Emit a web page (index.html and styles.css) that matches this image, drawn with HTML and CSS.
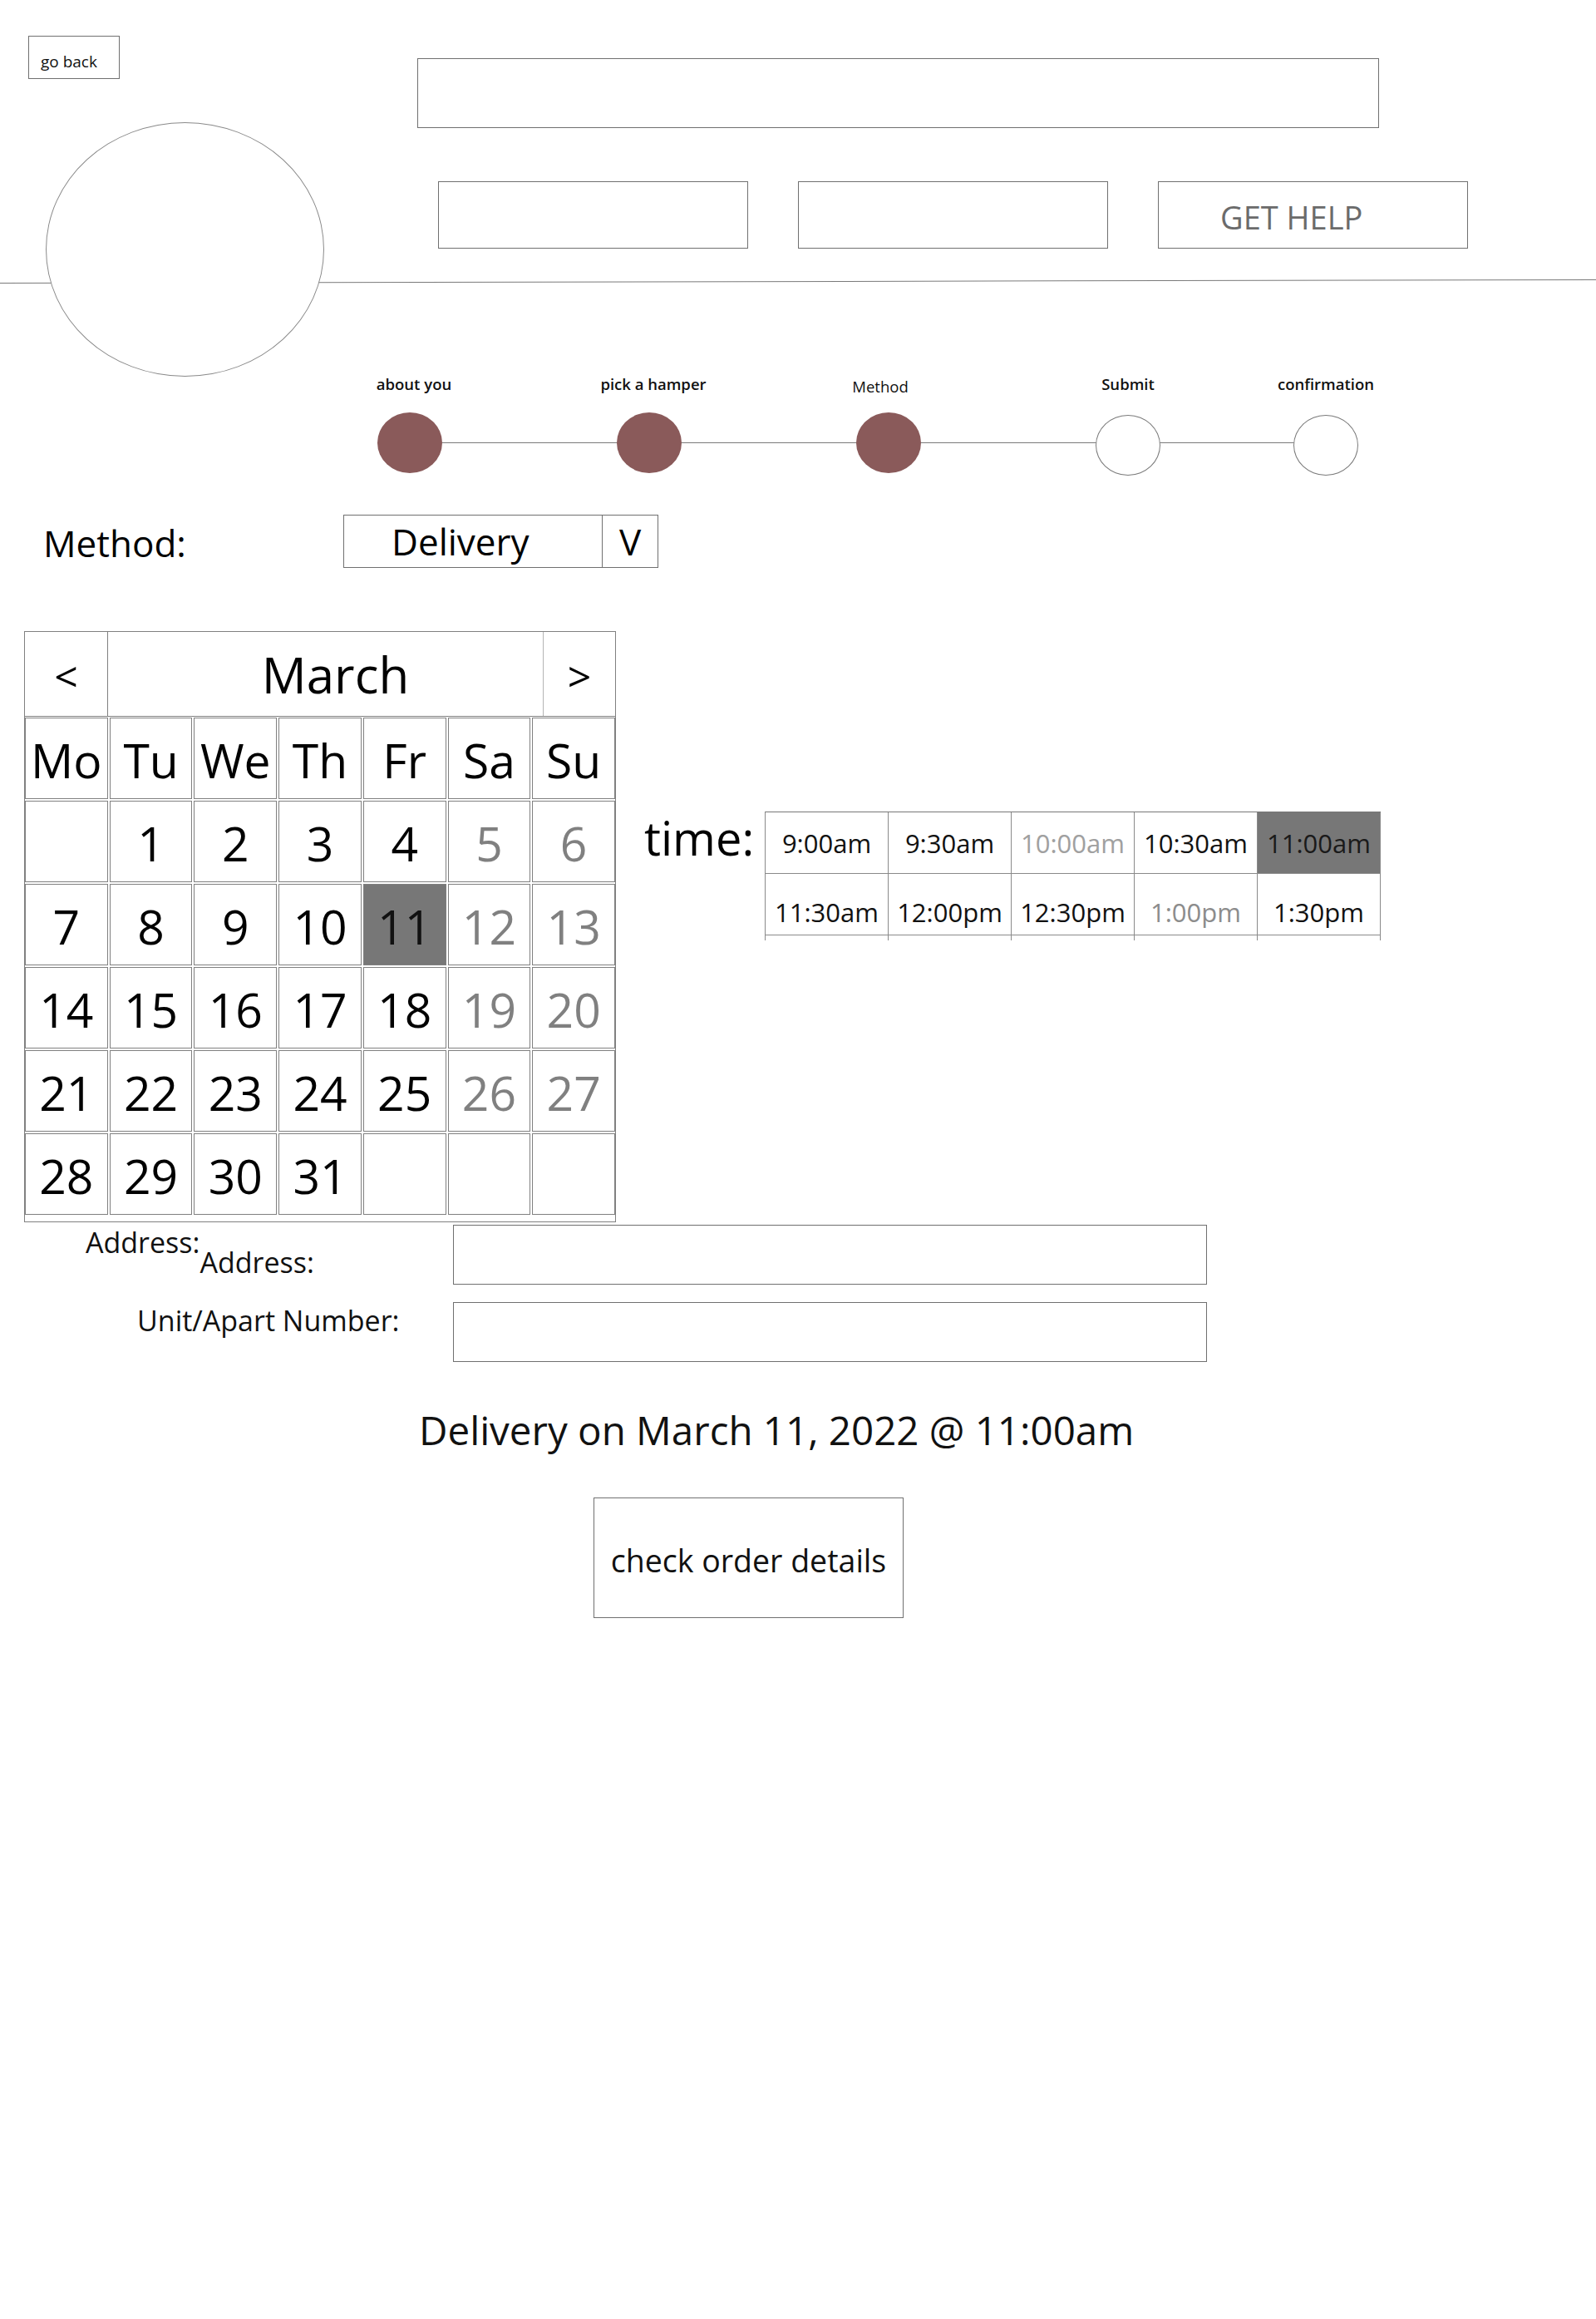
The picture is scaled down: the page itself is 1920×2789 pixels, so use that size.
FILE: index.html
```html
<!DOCTYPE html>
<html lang="en">
<head>
<meta charset="utf-8">
<title>Method</title>
<link rel="stylesheet" href="styles.css">
</head>
<body>
<div class="page">
  <header class="top">
    <div class="brand-col">
      <button class="back-btn" type="button">go back</button>
      <div class="logo"></div>
    </div>
    <div class="nav-col">
      <div class="search-bar"></div>
      <div class="nav-buttons">
        <div class="nav-btn"></div>
        <div class="nav-btn"></div>
        <div class="nav-btn help">GET HELP</div>
      </div>
    </div>
  </header>

  <nav class="steps">
    <div class="step done"><span class="step-label nudge-r">about you</span><span class="dot"></span></div>
    <div class="step done"><span class="step-label nudge-r">pick a hamper</span><span class="dot"></span></div>
    <div class="step done"><span class="step-label thin">Method</span><span class="dot"></span></div>
    <div class="step"><span class="step-label">Submit</span><span class="dot"></span></div>
    <div class="step last"><span class="step-label">confirmation</span><span class="dot"></span></div>
  </nav>

  <section class="method-row">
    <div class="method-label">Method:</div>
    <div class="select">
      <div class="select-value">Delivery</div>
      <div class="select-arrow">V</div>
    </div>
  </section>

  <section class="schedule">
    <div class="calendar">
      <div class="cal-head">
        <div class="cal-prev">&lt;</div>
        <div class="cal-month">March</div>
        <div class="cal-next">&gt;</div>
      </div>
      <div class="cal-grid">
        <div class="cell">Mo</div><div class="cell">Tu</div><div class="cell">We</div><div class="cell">Th</div><div class="cell">Fr</div><div class="cell">Sa</div><div class="cell">Su</div>
        <div class="cell"></div><div class="cell">1</div><div class="cell">2</div><div class="cell">3</div><div class="cell">4</div><div class="cell off">5</div><div class="cell off">6</div>
        <div class="cell">7</div><div class="cell">8</div><div class="cell">9</div><div class="cell">10</div><div class="cell picked">11</div><div class="cell off">12</div><div class="cell off">13</div>
        <div class="cell">14</div><div class="cell">15</div><div class="cell">16</div><div class="cell">17</div><div class="cell">18</div><div class="cell off">19</div><div class="cell off">20</div>
        <div class="cell">21</div><div class="cell">22</div><div class="cell">23</div><div class="cell">24</div><div class="cell">25</div><div class="cell off">26</div><div class="cell off">27</div>
        <div class="cell">28</div><div class="cell">29</div><div class="cell">30</div><div class="cell">31</div><div class="cell"></div><div class="cell"></div><div class="cell"></div>
      </div>
    </div>

    <div class="time-block">
      <div class="time-label">time:</div>
      <div class="time-table">
        <div class="slot">9:00am</div>
        <div class="slot">9:30am</div>
        <div class="slot faded">10:00am</div>
        <div class="slot">10:30am</div>
        <div class="slot picked">11:00am</div>
        <div class="slot low">11:30am</div>
        <div class="slot low">12:00pm</div>
        <div class="slot low">12:30pm</div>
        <div class="slot low dim">1:00pm</div>
        <div class="slot low">1:30pm</div>
        <div class="slot tail"></div>
        <div class="slot tail"></div>
        <div class="slot tail"></div>
        <div class="slot tail"></div>
        <div class="slot tail"></div>
      </div>
    </div>
  </section>

  <section class="address-form">
    <div class="form-row">
      <label class="form-label first">Address:<span class="dup">Address:</span></label>
      <input class="field" type="text" aria-label="Address">
    </div>
    <div class="form-row second">
      <label class="form-label unit">Unit/Apart Number:</label>
      <input class="field" type="text" aria-label="Unit/Apart Number">
    </div>
  </section>

  <p class="summary">Delivery on March 11, 2022 @ 11:00am</p>

  <button class="confirm-btn" type="button">check order details</button>
</div>
</body>
</html>
```

FILE: styles.css
```css
* { box-sizing: border-box; }

html, body {
  margin: 0;
  padding: 0;
  background: #ffffff;
}

body {
  font-family: "Open Sans", "Noto Sans", sans-serif;
  color: #000;
}

.page {
  width: 1920px;
  min-height: 2789px;
}

/* ---------- header ---------- */
.top {
  display: flex;
  position: relative;
}

.top::before {
  content: "";
  position: absolute;
  left: 0;
  right: 0;
  top: 338px;
  height: 1px;
  background: #7a7a7a;
  transform: rotate(-0.12deg);
}

.brand-col {
  width: 502px;
  flex: none;
  display: flex;
  flex-direction: column;
  align-items: flex-start;
  position: relative;
  z-index: 1;
}

.back-btn {
  margin: 43px 0 0 34px;
  width: 110px;
  height: 52px;
  border: 1px solid #707070;
  background: #fff;
  font-family: "Open Sans", sans-serif;
  font-size: 19px;
  line-height: 26px;
  color: #111;
  text-align: left;
  padding: 10px 0 0 14px;
}

.logo {
  margin: 52px 0 0 55px;
  width: 335px;
  height: 306px;
  border: 1px solid #8a8a8a;
  border-radius: 50%;
  background: #fff;
}

.nav-col {
  padding-top: 70px;
}

.search-bar {
  width: 1157px;
  height: 84px;
  border: 1px solid #707070;
}

.nav-buttons {
  display: flex;
  gap: 60px;
  margin: 64px 0 0 25px;
}

.nav-btn {
  width: 373px;
  height: 81px;
  border: 1px solid #707070;
  display: flex;
  align-items: center;
}

.nav-btn.help {
  padding: 4px 0 0 74px;
  font-size: 38px;
  color: #6b6b6b;
}

/* ---------- steps ---------- */
.steps {
  display: flex;
  gap: 128px;
  padding-left: 413px;
  position: relative;
}

.steps::before {
  content: "";
  position: absolute;
  left: 493px;
  width: 1102px;
  top: 79px;
  height: 1px;
  background: #7a7a7a;
}

.step {
  width: 160px;
  display: flex;
  flex-direction: column;
  align-items: center;
}

.step.last {
  margin-left: -50px;
}

.step-label {
  font-size: 18.5px;
  line-height: 24px;
  font-weight: 600;
  color: #111;
  margin-top: -3px;
  margin-bottom: 3px;
}

.step-label.nudge-r {
  margin-left: 10px;
}

.step-label.thin {
  font-weight: 400;
  margin-top: 0;
  margin-bottom: 0;
  margin-right: 20px;
}

.dot {
  display: block;
  width: 78px;
  height: 73px;
  margin-top: 22px;
  border-radius: 50%;
  border: 1px solid #7a7a7a;
  background: #fff;
  position: relative;
  z-index: 1;
}

.step.done .dot {
  margin-top: 19px;
  margin-bottom: 3px;
  border: none;
  background: #8a5a5a;
}

/* ---------- method ---------- */
.method-row {
  display: flex;
  align-items: center;
  margin-top: 47px;
  padding-left: 52px;
}

.method-label {
  width: 361px;
  font-size: 44px;
  line-height: 60px;
  padding-top: 3px;
}

.select {
  display: flex;
  width: 379px;
  height: 64px;
  border: 1px solid #707070;
}

.select-value {
  width: 311px;
  border-right: 1px solid #707070;
  font-size: 44px;
  line-height: 62px;
  padding-left: 57px;
}

.select-arrow {
  flex: 1;
  text-align: center;
  font-size: 44px;
  line-height: 62px;
}

/* ---------- schedule ---------- */
.schedule {
  display: flex;
  align-items: flex-start;
  margin-top: 76px;
  padding-left: 29px;
}

.calendar {
  width: 712px;
  border: 1px solid #808080;
  padding-bottom: 8px;
}

.cal-head {
  display: flex;
  height: 102px;
  border-bottom: 1px solid #808080;
}

.cal-prev,
.cal-month,
.cal-next {
  display: flex;
  align-items: center;
  justify-content: center;
}

.cal-prev {
  width: 100px;
  border-right: 1px solid #808080;
  font-size: 50px;
  padding-top: 4px;
}

.cal-month {
  flex: 1;
  font-size: 60px;
  padding-left: 24px;
}

.cal-next {
  width: 87px;
  border-left: 1px solid #b4b4b4;
  font-size: 50px;
  padding-top: 4px;
}

.cal-grid {
  display: grid;
  grid-template-columns: repeat(7, 1fr);
  grid-auto-rows: 98px;
  gap: 2px;
  padding-top: 1px;
}

.cell {
  border: 1px solid #808080;
  display: flex;
  align-items: center;
  justify-content: center;
  font-size: 57px;
  line-height: 1;
  padding-top: 4px;
}

.cell.off {
  color: #808080;
}

.cell.picked {
  background: #777777;
  color: #111;
}

.time-block {
  display: flex;
  align-items: flex-start;
  margin-left: 34px;
  margin-top: 217px;
}

.time-label {
  width: 145px;
  font-size: 56px;
  line-height: 76px;
  margin-top: -7px;
}

.time-table {
  display: grid;
  grid-template-columns: repeat(5, 148px);
  grid-template-rows: 74px 74px 6px;
  border-top: 1px solid #777;
  border-left: 1px solid #8a8a8a;
}

.slot {
  border-right: 1px solid #8a8a8a;
  border-bottom: 1px solid #8a8a8a;
  display: flex;
  align-items: center;
  justify-content: center;
  font-size: 31px;
  color: #111;
}

.slot.low {
  padding-top: 18px;
}

.slot.tail {
  border-bottom: none;
}

.slot.faded {
  color: #a0a0a0;
}

.slot.dim {
  color: #8c8c8c;
}

.slot.picked {
  background: #777777;
  color: #1a1a1a;
}

/* ---------- address ---------- */
.address-form {
  margin-top: 1px;
}

.form-row {
  display: flex;
  align-items: flex-start;
}

.form-row.second {
  margin-top: 20px;
}

.form-label {
  width: 545px;
  flex: none;
  font-size: 34px;
  line-height: 46px;
  color: #111;
}

.form-label.first {
  padding-left: 103px;
}

.form-label.unit {
  padding-left: 165px;
}

.dup {
  vertical-align: -24px;
}

.field {
  width: 907px;
  height: 72px;
  margin: 2px 0 0 0;
  border: 1px solid #707070;
  background: #fff;
  outline: none;
  font-family: "Open Sans", sans-serif;
  font-size: 30px;
  padding: 0 12px;
}

.form-row.second .field {
  margin-top: 1px;
}

.summary {
  margin: 49px 0 0 0;
  padding-left: 504px;
  font-size: 47.5px;
  line-height: 65px;
  color: #111;
}

.confirm-btn {
  display: block;
  margin: 49px 0 0 714px;
  width: 373px;
  height: 145px;
  border: 1px solid #707070;
  background: #fff;
  font-family: "Open Sans", sans-serif;
  font-size: 37.5px;
  color: #111;
  padding: 6px 0 0 0;
}
```
